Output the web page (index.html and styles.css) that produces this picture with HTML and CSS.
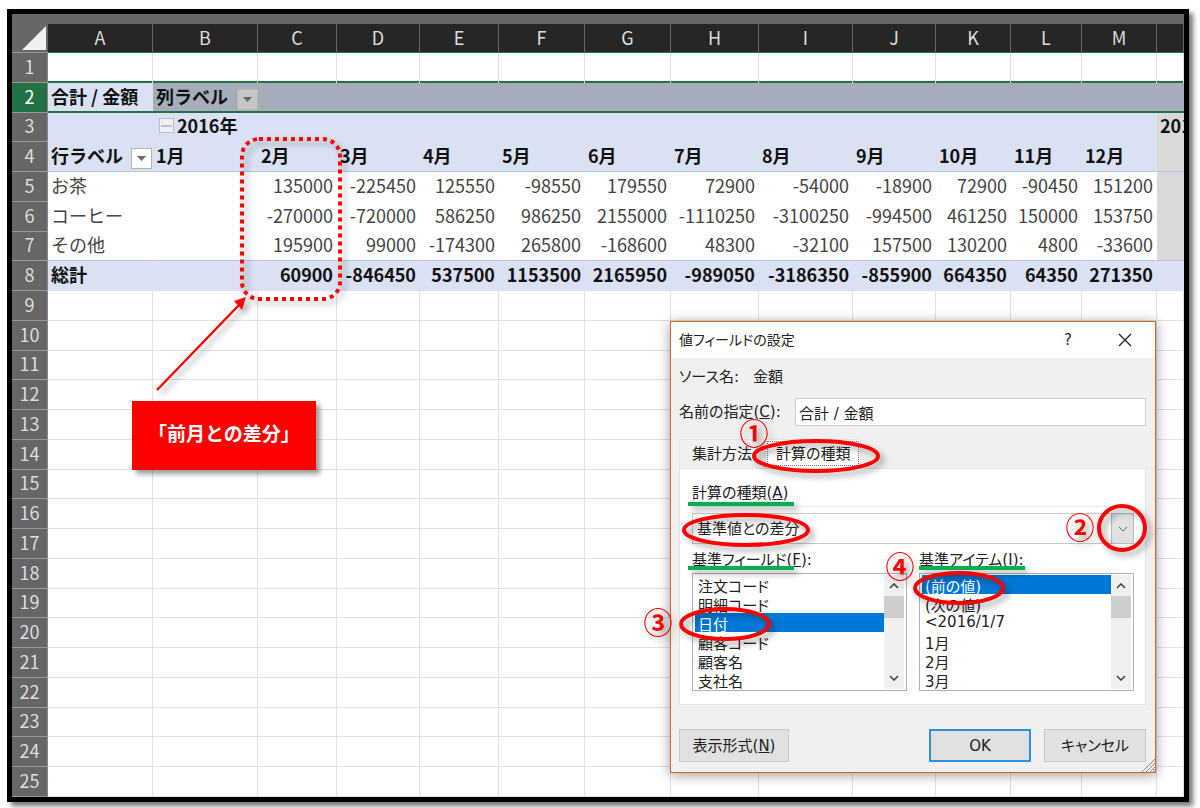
FILE: index.html
```html
<!DOCTYPE html>
<html lang="ja">
<head>
    <meta charset="UTF-8">
    <meta name="viewport" content="width=device-width, initial-scale=1.0">
    <title>値フィールドの設定</title>
    <link rel="stylesheet" href="styles.css">
</head>
<body>
    <main class="sheet">
        <table class="grid">
            <colgroup>
                <col class="c-num"><col class="c-a"><col class="c-a"><col class="c-c"><col class="c-d"><col class="c-e"><col class="c-f"><col class="c-f"><col class="c-h"><col class="c-i"><col class="c-d"><col class="c-k"><col class="c-l"><col class="c-k"><col>
            </colgroup>
            <thead>
                <tr>
                    <th class="corner"><svg width="26" height="26" viewBox="0 0 26 26"><path d="M25 1V25H1Z" fill="#f0f0f0"/></svg></th>
                    <th>A</th><th>B</th><th>C</th><th>D</th><th>E</th><th>F</th><th>G</th><th>H</th><th>I</th><th>J</th><th>K</th><th>L</th><th>M</th><th></th>
                </tr>
            </thead>
            <tbody id="gridBody"></tbody>
        </table>

        <!-- 吹き出しと矢印 -->
        <svg class="marks" width="350" height="400">
            <rect x="230" y="125" width="98" height="160" rx="17" fill="none" stroke="#ff0000" stroke-width="4" stroke-dasharray="4 4"/>
            <path d="M145 376L227 291" stroke="#ff0000" stroke-width="2.4" fill="none"/>
            <path d="M234 283L222 287L230 296Z" fill="#ff0000"/>
        </svg>
        <div class="callout">「前月との差分」</div>

        <!-- 値フィールドの設定 -->
        <form class="dialog" onsubmit="return false">
            <div class="titlebar">
                <span class="title">値フィールドの設定</span>
                <button type="button" class="help">?</button>
                <button type="button" class="close" aria-label="閉じる"><svg width="14" height="14" viewBox="0 0 14 14"><path d="M1 1L13 13M13 1L1 13" stroke="#222" stroke-width="1.3"/></svg></button>
            </div>
            <div class="content">
                <div class="source"><span>ソース名:</span><span>金額</span></div>
                <div class="name-row">
                    <label for="fieldName">名前の指定(<u>C</u>):</label>
                    <input type="text" id="fieldName" value="合計 / 金額">
                </div>
                <div class="tabs">
                    <button type="button">集計方法</button>
                    <button type="button" class="active">計算の種類</button>
                </div>
                <div class="panel">
                    <label class="kind-label" for="calcKind">計算の種類(<u>A</u>)</label>
                    <div class="combo">
                        <select id="calcKind">
                            <option>基準値との差分</option>
                        </select>
                        <span class="arrow"><svg width="10" height="6" viewBox="0 0 10 6"><path d="M1 1L5 5L9 1" stroke="#666" fill="none"/></svg></span>
                    </div>
                    <div class="lists">
                        <div class="list-col">
                            <label for="baseField">基準フィールド(<u>F</u>):</label>
                            <div class="listbox">
                                <select id="baseField" size="6">
                                    <option>注文コード</option>
                                    <option>明細コード</option>
                                    <option selected>日付</option>
                                    <option>顧客コード</option>
                                    <option>顧客名</option>
                                    <option>支社名</option>
                                </select>
                                <div class="scroll">
                                    <svg width="10" height="6" viewBox="0 0 10 6"><path d="M1 5L5 1L9 5" stroke="#444" stroke-width="1.6" fill="none"/></svg>
                                    <span class="thumb"></span>
                                    <svg class="down" width="10" height="6" viewBox="0 0 10 6"><path d="M1 1L5 5L9 1" stroke="#444" stroke-width="1.6" fill="none"/></svg>
                                </div>
                            </div>
                        </div>
                        <div class="list-col">
                            <label for="baseItem">基準アイテム(<u>I</u>):</label>
                            <div class="listbox">
                                <select id="baseItem" size="6">
                                    <option selected>(前の値)</option>
                                    <option>(次の値)</option>
                                    <option>&lt;2016/1/7</option>
                                    <option>1月</option>
                                    <option>2月</option>
                                    <option>3月</option>
                                </select>
                                <div class="scroll">
                                    <svg width="10" height="6" viewBox="0 0 10 6"><path d="M1 5L5 1L9 5" stroke="#444" stroke-width="1.6" fill="none"/></svg>
                                    <span class="thumb"></span>
                                    <svg class="down" width="10" height="6" viewBox="0 0 10 6"><path d="M1 1L5 5L9 1" stroke="#444" stroke-width="1.6" fill="none"/></svg>
                                </div>
                            </div>
                        </div>
                    </div>
                </div>
                <div class="buttons">
                    <button type="button" class="format">表示形式(<u>N</u>)</button>
                    <button type="submit" class="ok">OK</button>
                    <button type="button">キャンセル</button>
                </div>
            </div>
            <svg class="grip" width="14" height="14" viewBox="0 0 14 14"><path d="M1 14L14 1M5 14L14 5M9 14L14 9M12 14L14 12" stroke="#888"/></svg>

            <!-- 手順の印 -->
            <svg class="marks" width="486" height="451">
                <g stroke="#00b050" stroke-width="4">
                    <path d="M18 183H124"/>
                    <path d="M18 247H124"/>
                    <path d="M249 247H355"/>
                </g>
                <g fill="none" stroke="#ff0000" stroke-width="4">
                    <ellipse cx="146" cy="135" rx="62" ry="15"/>
                    <ellipse cx="76" cy="209" rx="62" ry="15"/>
                    <ellipse cx="452" cy="207" rx="23" ry="22"/>
                    <ellipse cx="55" cy="303" rx="44" ry="15"/>
                    <ellipse cx="289" cy="267" rx="44" ry="15"/>
                </g>
                <g class="steps">
                    <text x="84" y="124">①</text>
                    <text x="410" y="218">②</text>
                    <text x="-12" y="313">③</text>
                    <text x="230" y="257">④</text>
                </g>
            </svg>
        </form>
    </main>
    <script src="script.js"></script>
</body>
</html>
```
FILE: styles.css
```css
* {
    box-sizing: border-box;
}

body {
    margin: 0;
    padding: 9px 11px 6px 7px;
    background: #fff;
    font-family: "Noto Sans CJK JP", sans-serif;
    font-size: 18px;
    color: #444;
}

.sheet {
    position: relative;
    border: 5px solid #000;
    padding-top: 10px;
    background: #666;
    box-shadow: 4px 4px 5px rgba(0, 0, 0, 0.55);
}

/* シート */
.grid {
    width: 100%;
    height: calc(100vh - 35px);
    table-layout: fixed;
    border-collapse: separate;
    border-spacing: 0;
    background: #fff;
}

.c-num { width: 36px; }
.c-a { width: 105px; }
.c-c { width: 79px; }
.c-d { width: 83px; }
.c-e { width: 79px; }
.c-f { width: 86px; }
.c-h { width: 88px; }
.c-i { width: 94px; }
.c-k { width: 75px; }
.c-l { width: 71px; }

.grid th,
.grid td {
    padding: 0 3px 3px;
    line-height: 24px;
    font-weight: normal;
    white-space: nowrap;
    overflow: hidden;
    border-right: 1px solid #e1e1e1;
    border-bottom: 1px solid #e1e1e1;
}

.grid thead th {
    height: 29px;
    background: #262626;
    color: #ddd;
    border-right-color: #666;
    border-bottom: 1px solid #217346;
}

.grid thead .corner {
    padding: 0;
    background: #666;
    border-bottom-color: #999;
    line-height: 0;
    text-align: right;
}

.grid tbody th {
    background: #666;
    color: #ddd;
    border-right-color: #888;
    border-bottom-color: #999;
}

.grid tbody .picked th {
    background: #217346;
    color: #fff;
}

.grid td.num {
    text-align: right;
}

.grid .plain td {
    border-color: #fff;
}

.grid .blue td {
    background: #d9e1f2;
    border-color: #d9e1f2;
    color: #111;
    font-weight: bold;
}

.grid .gray td:last-child {
    padding-right: 0;
    border-right: none;
    border-bottom-color: #d9d9d9;
    background: #d9d9d9;
}

.grid .last td,
.grid .last td:last-child,
.grid .heads td,
.grid .heads td:last-child {
    border-bottom-color: #b4c6e7;
}

.grid .above td {
    border-bottom: none;
    box-shadow: inset 0 -2px #217346;
}

.grid .picked td {
    border: none;
    box-shadow: inset 0 -2px #217346;
    background: #a6adba;
}

.grid .picked td:nth-child(2) {
    background: #d9e1f2;
}

.cell {
    display: flex;
    justify-content: space-between;
    align-items: center;
}

.cell.left {
    justify-content: flex-start;
    gap: 3px;
    padding-left: 3px;
}

.filter {
    width: 21px;
    height: 21px;
    margin: 3px -3px -3px 0;
    padding: 0;
    border: 1px solid #b5b5b5;
    background: #fff;
    line-height: 0;
}

.picked .filter {
    background: #c6c6c6;
}

.toggle {
    width: 15px;
    height: 15px;
    padding: 0;
    border: 1px solid #b9bfcc;
    background: #eef0f4;
    line-height: 0;
}

/* 注釈 */
.marks {
    position: absolute;
    left: 0;
    top: 0;
    overflow: visible;
    pointer-events: none;
    filter: drop-shadow(4px 4px 3px rgba(0, 0, 0, 0.35));
}

.steps {
    fill: #ff0000;
    font-size: 29px;
    font-weight: bold;
    text-anchor: middle;
}

.callout {
    position: absolute;
    left: 120px;
    top: 387px;
    padding: 18px 16px 23px;
    background: #ff0000;
    box-shadow: 4px 4px 5px rgba(0, 0, 0, 0.4);
    color: #fff;
    font-size: 19px;
    line-height: 28px;
    font-weight: bold;
}

/* ダイアログ */
.dialog {
    position: absolute;
    left: 658px;
    top: 307px;
    width: 486px;
    border: 1px solid #cc6a25;
    background: #f0f0f0;
    box-shadow: 0 2px 12px rgba(0, 0, 0, 0.4);
    color: #222;
    font-family: "DejaVu Sans", "Noto Sans CJK JP", sans-serif;
    font-size: 15px;
    line-height: 20px;
    font-feature-settings: "palt";
}

.dialog .marks {
    left: -1px;
    top: -1px;
    font-family: "Noto Sans CJK JP", sans-serif;
}

.dialog button,
.dialog input,
.dialog select {
    margin: 0;
    font: inherit;
    font-feature-settings: inherit;
    color: inherit;
}

.titlebar {
    display: flex;
    align-items: center;
    height: 36px;
    padding: 0 8px;
    background: #fff;
}

.titlebar .title {
    flex: 1;
    font-size: 14px;
}

.titlebar button {
    width: 70px;
    padding: 0;
    border: none;
    background: none;
}

.titlebar .close {
    width: 44px;
    line-height: 0;
}

.content {
    padding: 9px 9px 10px 8px;
}

.source {
    display: flex;
    gap: 14px;
}

.name-row {
    display: flex;
    align-items: center;
    margin-top: 11px;
}

.name-row label {
    width: 116px;
}

.name-row input {
    flex: 1;
    height: 28px;
    padding: 0 3px;
    border: 1px solid #ccc;
    background: #fff;
}

.tabs {
    display: flex;
    margin-top: 13px;
}

.tabs button {
    height: 29px;
    padding: 0 12px;
    border: 1px solid #e6e6e6;
    border-bottom: none;
    background: #f0f0f0;
}

.tabs .active {
    padding: 0 10px;
    background: #fff;
    outline: 1px dotted #777;
    outline-offset: -3px;
}

.panel {
    padding: 14px 11px 13px 12px;
    border: 1px solid #e2e2e2;
    background: #fff;
}

.kind-label {
    display: block;
    padding-bottom: 3px;
    border-bottom: 1px solid #eee;
}

.combo {
    position: relative;
    margin-top: 6px;
}

.combo select {
    display: block;
    width: 100%;
    height: 31px;
    padding: 0 4px;
    border: 1px solid #c8c8cc;
    border-radius: 0;
    background: #fff;
    appearance: none;
}

.combo .arrow {
    position: absolute;
    right: 0;
    top: 0;
    display: flex;
    align-items: center;
    justify-content: center;
    width: 23px;
    height: 31px;
    border: 1px solid #bbb;
    background: #e1e1e1;
    pointer-events: none;
}

.lists {
    display: grid;
    grid-template-columns: 1fr 1fr;
    gap: 12px;
    margin-top: 6px;
}

.list-col label {
    display: block;
}

.listbox {
    display: flex;
    margin-top: 3px;
    padding: 1px 2px;
    border: 1px solid #b0b0b8;
}

.listbox select {
    flex: 1;
    height: 114px;
    padding: 0;
    border: none;
    border-radius: 0;
    outline: none;
    background: #fff;
    overflow: hidden;
}

.listbox option {
    height: 19px;
    min-height: 19px;
    padding: 0 3px;
    line-height: 18px;
}

.listbox option:checked {
    background: linear-gradient(#0078d7, #0078d7);
    -webkit-text-fill-color: #fff;
}

.scroll {
    display: flex;
    flex-direction: column;
    align-items: center;
    width: 20px;
    padding: 8px 0;
    background: #f0f0f0;
}

.thumb {
    width: 20px;
    height: 22px;
    margin-top: 7px;
    background: #cdcdcd;
}

.scroll .down {
    margin-top: auto;
}

.buttons {
    display: flex;
    gap: 13px;
    margin-top: 24px;
}

.buttons button {
    width: 102px;
    height: 33px;
    padding: 0;
    border: 1px solid #c8c8c8;
    background: #e1e1e1;
}

.buttons .format {
    width: 110px;
    margin-right: auto;
}

.buttons .ok {
    border: 2px solid #2b8fe0;
}

.grip {
    position: absolute;
    right: 0;
    bottom: 0;
}
```
FILE: script.js
```javascript
const drop = '<button class="filter"><svg width="9" height="5" viewBox="0 0 9 5"><path d="M0 0H9L4.5 5Z" fill="#666"/></svg></button>';
const minus = '<button class="toggle"><svg width="11" height="2" viewBox="0 0 11 2"><path d="M0 1H11" stroke="#8a94a8"/></svg></button>';

const rowClass = {
    1: "above",
    2: "blue picked",
    3: "blue gray",
    4: "blue heads gray",
    5: "plain gray",
    6: "plain gray",
    7: "plain gray last",
    8: "blue"
};

const cells = {
    2: ["合計 / 金額", `<div class="cell">列ラベル${drop}</div>`],
    3: ["", `<div class="cell left">${minus}2016年</div>`, "", "", "", "", "", "", "", "", "", "", "", "201"],
    4: [`<div class="cell">行ラベル${drop}</div>`, "1月", "2月", "3月", "4月", "5月", "6月", "7月", "8月", "9月", "10月", "11月", "12月"],
    5: ["お茶", "", 135000, -225450, 125550, -98550, 179550, 72900, -54000, -18900, 72900, -90450, 151200],
    6: ["コーヒー", "", -270000, -720000, 586250, 986250, 2155000, -1110250, -3100250, -994500, 461250, 150000, 153750],
    7: ["その他", "", 195900, 99000, -174300, 265800, -168600, 48300, -32100, 157500, 130200, 4800, -33600],
    8: ["総計", "", 60900, -846450, 537500, 1153500, 2165950, -989050, -3186350, -855900, 664350, 64350, 271350]
};

const body = document.getElementById("gridBody");
let html = "";

for (let r = 1; r <= 25; r++) {
    html += `<tr class="${rowClass[r] || ""}"><th>${r}</th>`;
    for (let c = 0; c < 14; c++) {
        const value = (cells[r] || [])[c] ?? "";
        html += `<td class="${typeof value === "number" ? "num" : ""}">${value}</td>`;
    }
    html += "</tr>";
}

body.innerHTML = html;
```
